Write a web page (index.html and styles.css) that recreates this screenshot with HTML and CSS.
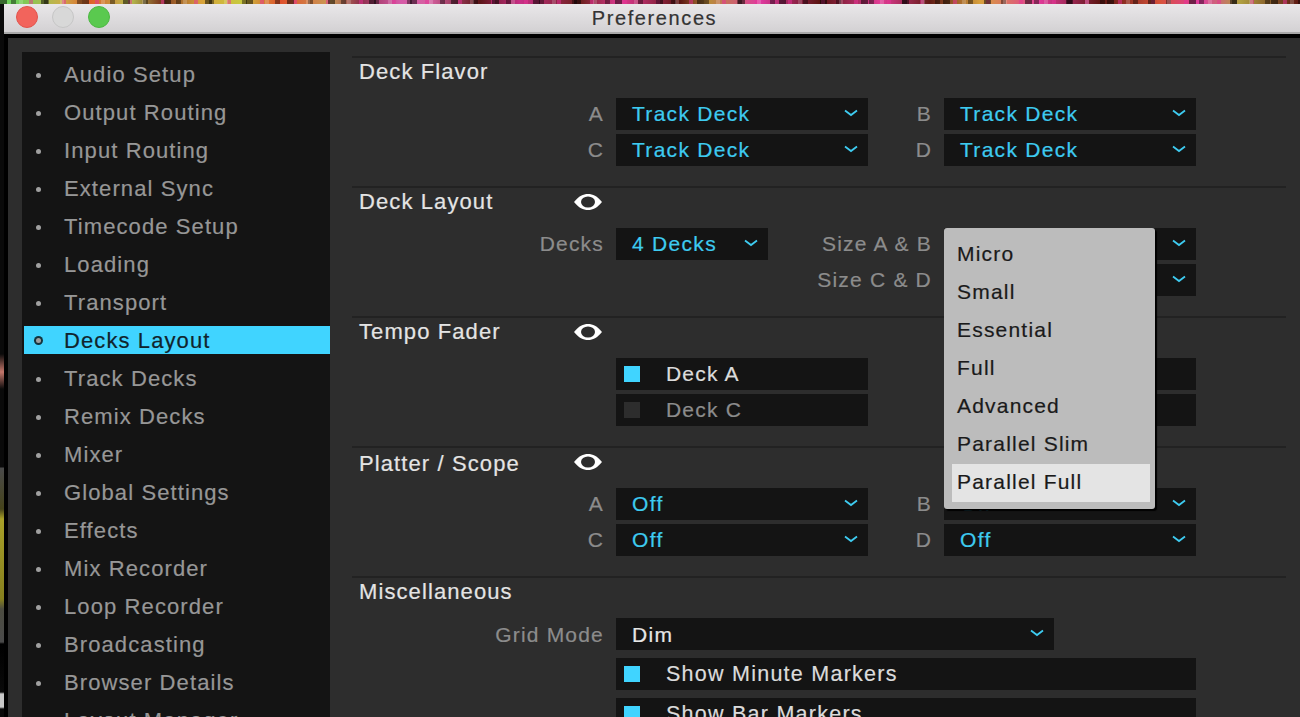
FILE: index.html
```html
<!DOCTYPE html>
<html lang="en">
<head>
  <meta charset="UTF-8" />
  <title>Preferences</title>
  <link rel="stylesheet" href="styles.css">
</head>
<body>

  <svg class="defs" width="0" height="0">
    <symbol id="chevron" viewBox="0 0 14 8">
      <path d="M1 1.5 L7 6 L13 1.5" fill="none" stroke="#3ecbf0" stroke-width="1.8"/>
    </symbol>
    <symbol id="eye" viewBox="0 0 28 16">
      <path d="M0 8 C5 2 9 0 14 0 C19 0 23 2 28 8 C23 14 19 16 14 16 C9 16 5 14 0 8 Z" fill="#fff"/>
      <ellipse cx="14" cy="8" rx="7" ry="5.5" fill="#2d2d2d"/>
    </symbol>
  </svg>

  <div class="desktop-top"></div>

  <div class="screen">
    <div class="desktop-edge"></div>

    <div class="window">
      <div class="titlebar">
        <div class="lights">
          <span class="light red"></span>
          <span class="light grey"></span>
          <span class="light green"></span>
        </div>
        <div class="title">Preferences</div>
      </div>

      <div class="panel">
        <ul class="sidebar">
          <li>Audio Setup</li>
          <li>Output Routing</li>
          <li>Input Routing</li>
          <li>External Sync</li>
          <li>Timecode Setup</li>
          <li>Loading</li>
          <li>Transport</li>
          <li class="active">Decks Layout</li>
          <li>Track Decks</li>
          <li>Remix Decks</li>
          <li>Mixer</li>
          <li>Global Settings</li>
          <li>Effects</li>
          <li>Mix Recorder</li>
          <li>Loop Recorder</li>
          <li>Broadcasting</li>
          <li>Browser Details</li>
          <li>Layout Manager</li>
        </ul>

        <div class="content">

          <section class="section">
            <div class="section-head"><h3>Deck Flavor</h3></div>
            <div class="rows">
              <div class="label"><span>A</span></div>
              <div class="dropdown"><span>Track Deck</span><svg class="chevron"><use href="#chevron"/></svg></div>
              <div class="label"><span>B</span></div>
              <div class="dropdown"><span>Track Deck</span><svg class="chevron"><use href="#chevron"/></svg></div>
              <div class="label"><span>C</span></div>
              <div class="dropdown"><span>Track Deck</span><svg class="chevron"><use href="#chevron"/></svg></div>
              <div class="label"><span>D</span></div>
              <div class="dropdown"><span>Track Deck</span><svg class="chevron"><use href="#chevron"/></svg></div>
            </div>
          </section>

          <section class="section">
            <div class="section-head"><h3>Deck Layout</h3><svg class="eye"><use href="#eye"/></svg></div>
            <div class="rows">
              <div class="label"><span>Decks</span></div>
              <div class="dropdown short"><span>4 Decks</span><svg class="chevron"><use href="#chevron"/></svg></div>
              <div class="label"><span>Size A &amp; B</span></div>
              <div class="dropdown end"><svg class="chevron"><use href="#chevron"/></svg></div>
              <div class="label"></div>
              <div></div>
              <div class="label"><span>Size C &amp; D</span></div>
              <div class="dropdown end"><svg class="chevron"><use href="#chevron"/></svg></div>
            </div>

            <div class="popup">
              <div class="popup-item">Micro</div>
              <div class="popup-item">Small</div>
              <div class="popup-item">Essential</div>
              <div class="popup-item">Full</div>
              <div class="popup-item">Advanced</div>
              <div class="popup-item">Parallel Slim</div>
              <div class="popup-item selected">Parallel Full</div>
            </div>
          </section>

          <section class="section">
            <div class="section-head"><h3>Tempo Fader</h3><svg class="eye"><use href="#eye"/></svg></div>
            <div class="rows">
              <div class="label"></div>
              <div class="check"><i class="box on"></i><span>Deck A</span></div>
              <div class="label"></div>
              <div class="check"></div>
              <div class="label"></div>
              <div class="check off"><i class="box"></i><span>Deck C</span></div>
              <div class="label"></div>
              <div class="check off"></div>
            </div>
          </section>

          <section class="section">
            <div class="section-head"><h3 class="low">Platter / Scope</h3><svg class="eye"><use href="#eye"/></svg></div>
            <div class="rows">
              <div class="label"><span>A</span></div>
              <div class="dropdown"><span>Off</span><svg class="chevron"><use href="#chevron"/></svg></div>
              <div class="label"><span>B</span></div>
              <div class="dropdown"><span>Off</span><svg class="chevron"><use href="#chevron"/></svg></div>
              <div class="label"><span>C</span></div>
              <div class="dropdown"><span>Off</span><svg class="chevron"><use href="#chevron"/></svg></div>
              <div class="label"><span>D</span></div>
              <div class="dropdown"><span>Off</span><svg class="chevron"><use href="#chevron"/></svg></div>
            </div>
          </section>

          <section class="section">
            <div class="section-head"><h3>Miscellaneous</h3></div>
            <div class="rows misc">
              <div class="label"><span>Grid Mode</span></div>
              <div class="dropdown wide white"><span>Dim</span><svg class="chevron"><use href="#chevron"/></svg></div>
              <div class="label"></div>
              <div class="check full"><i class="box on"></i><span>Show Minute Markers</span></div>
              <div class="label"></div>
              <div class="check full"><i class="box on"></i><span>Show Bar Markers</span></div>
            </div>
          </section>

        </div>
      </div>
    </div>
  </div>

</body>
</html>
```

FILE: styles.css
```css
* {
  box-sizing: border-box;
}

html, body {
  height: 100%;
}

body {
  margin: 0;
  background: #000;
  font-family: "Liberation Sans", Arial, sans-serif;
  font-size: 21px;
  letter-spacing: 1.2px;
  -webkit-text-stroke: 0.2px;
  overflow: hidden;
}

.defs {
  position: absolute;
}

/* what shows of the desktop behind the window */
.desktop-top {
  height: 4px;
  background:
    repeating-linear-gradient(90deg, rgba(0,0,0,.5) 0 7px, transparent 7px 19px, rgba(255,255,255,.18) 19px 23px, transparent 23px 41px),
    repeating-linear-gradient(90deg, transparent 0 11px, rgba(0,0,0,.4) 11px 16px, transparent 16px 29px, rgba(230,50,150,.5) 29px 33px),
    linear-gradient(90deg,
      #6fd05a 0, #6fd05a 16px, #c9b04a 60px, #e0602a 90px, #b7c04f 130px, #7c3a20 160px,
      #d9a03a 200px, #c7c93f 240px, #e0502c 280px, #c99a55 330px, #8d2f4c 360px,
      #d65aa8 400px, #d560a0 430px, #5d1618 480px, #c92f86 520px, #6a1f1c 580px,
      #e23a94 620px, #5c1512 680px, #b98a3c 710px, #e03aa0 760px, #5a1310 820px,
      #e33c96 880px, #601a14 930px, #d8a03c 980px, #e03a98 1040px, #5c1512 1100px,
      #d8533a 1160px, #e03aa0 1200px, #b0a040 1240px, #5c1512 1300px);
}

.screen {
  display: flex;
  height: 713px;
}

.desktop-edge {
  width: 4px;
  flex: none;
  background: linear-gradient(180deg,
    #0a0a0a 0, #0a0a0a 350px, #c4766a 368px, #0a0a0a 385px, #0a0a0a 463px,
    #4a4a4a 464px, #45431a 505px, #a8a028 515px, #86801e 595px, #4c4c40 605px,
    #4a4a4a 638px, #000 640px, #0a0a0a 688px, #c8c8c8 690px, #c8c8c8 703px, #0a0a0a 705px);
}

.window {
  flex: 1;
  min-width: 0;
}

/* title bar */
.titlebar {
  height: 30px;
  background: linear-gradient(180deg, #e9e7e9, #d3d1d3);
  border-bottom: 2px solid #a8a8a8;
  display: flex;
  align-items: center;
  position: relative;
}

.lights {
  display: flex;
  gap: 14px;
  padding-left: 12px;
  margin-top: -3px;
}

.light {
  width: 22px;
  height: 22px;
  border-radius: 50%;
}

.light.red {
  background: #f2645c;
  border: 1px solid #e2544d;
}

.light.grey {
  background: #d8d8d8;
  border: 1px solid #c6c6c6;
}

.light.green {
  background: #5ac94f;
  border: 1px solid #4db843;
}

.title {
  position: absolute;
  left: 0;
  right: 0;
  padding-left: 5px;
  text-align: center;
  color: #333;
  font-size: 20px;
  letter-spacing: 1.6px;
  line-height: 28px;
}

/* main panel */
.panel {
  margin: 4px 0 0 4px;
  height: 680px;
  background: #2d2d2d;
  padding: 14px 0 0 14px;
  display: flex;
  overflow: hidden;
}

.sidebar {
  width: 308px;
  flex: none;
  margin: 0;
  padding: 8px 0 0 2px;
  list-style: none;
  background: #141414;
  color: #979797;
  font-size: 22px;
  letter-spacing: 1.1px;
}

.sidebar li {
  height: 28px;
  line-height: 30px;
  margin-bottom: 10px;
  padding-left: 40px;
  position: relative;
}

.sidebar li::before {
  content: "";
  position: absolute;
  left: 12px;
  top: 13px;
  width: 5px;
  height: 5px;
  border-radius: 50%;
  background: #a0a0a0;
}

.sidebar li.active {
  background: #40d4ff;
  color: #10242c;
}

.sidebar li.active::before {
  top: 12px;
  background: #a0a0a0;
  box-shadow: 0 0 0 2px #14343e;
}

.content {
  width: 934px;
  margin: 4px 0 0 22px;
}

.section {
  height: 130px;
  border-top: 2px solid #222;
  position: relative;
}

.section-head {
  height: 28px;
  margin-bottom: 12px;
  padding-left: 7px;
  display: flex;
  align-items: center;
}

.section-head h3 {
  margin: 0;
  width: 215px;
  font-size: 22px;
  letter-spacing: 1.1px;
  font-weight: normal;
  color: #e4e4e4;
}

.section-head h3.low {
  line-height: 30px;
  padding-top: 3px;
}

.eye {
  width: 28px;
  height: 16px;
}

.rows {
  display: grid;
  grid-template-columns: 264px 252px 76px 252px;
  grid-auto-rows: 32px;
  row-gap: 4px;
}

.rows.misc {
  row-gap: 8px;
}

.label {
  display: flex;
  justify-content: flex-end;
  align-items: center;
  padding-right: 12px;
  color: #8c8c8c;
  white-space: nowrap;
}

.rows.misc .label {
  padding-top: 2px;
}

.dropdown {
  background: #141414;
  color: #3ecbf0;
  display: flex;
  align-items: center;
  justify-content: space-between;
  padding: 0 10px 0 16px;
  letter-spacing: 1.3px;
}

.dropdown.end {
  justify-content: flex-end;
}

.dropdown.short {
  width: 152px;
}

.dropdown.wide {
  width: 438px;
  grid-column: 2 / 5;
}

.dropdown.white {
  color: #e6e6e6;
}

.dropdown.white span {
  padding-top: 2px;
}

.chevron {
  width: 14px;
  height: 8px;
  margin-top: -3px;
}

.check {
  background: #141414;
  color: #dcdcdc;
  display: flex;
  align-items: center;
  padding-left: 8px;
  gap: 26px;
}

.check.off {
  color: #8c8c8c;
}

.check.full {
  grid-column: 2 / 5;
  font-size: 21.5px;
  letter-spacing: 1.25px;
}

.box {
  width: 16px;
  height: 16px;
  background: #2d2d2d;
}

.box.on {
  background: #40d4ff;
}

/* size menu, opened over the Deck Layout rows */
.popup {
  position: absolute;
  left: 592px;
  top: 40px;
  width: 211px;
  height: 281px;
  padding: 8px;
  background: #bcbcbc;
  border-radius: 3px;
  box-shadow: 2px 2px 1px #000;
  color: #1a1a1a;
  z-index: 2;
}

.popup-item {
  height: 38px;
  line-height: 36px;
  padding-left: 5px;
}

.popup-item.selected {
  background: #e4e4e4;
  width: 198px;
}
```
